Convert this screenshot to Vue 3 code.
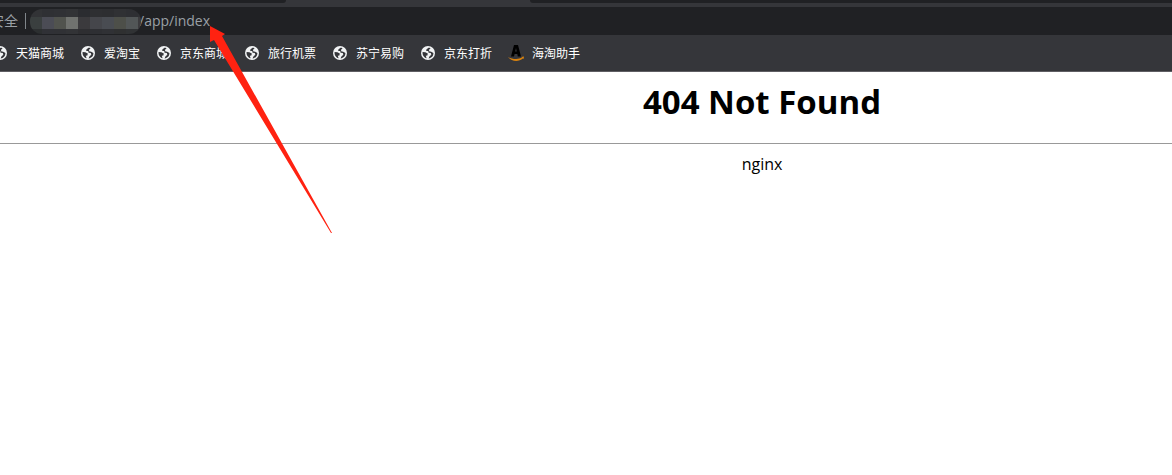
<script setup>
import { ref } from 'vue'

const url = ref('/app/index')

const bookmarks = [
    { title: '天猫商城', icon: 'globe' },
    { title: '爱淘宝', icon: 'globe' },
    { title: '京东商城', icon: 'globe' },
    { title: '旅行机票', icon: 'globe' },
    { title: '苏宁易购', icon: 'globe' },
    { title: '京东打折', icon: 'globe' },
    { title: '海淘助手', icon: 'amazon' },
]

// blurred host name, one colour per tile
const tiles = [
    '#323336', '#2f3034', '#303135', '#323336', '#2b2c30', '#2e2f32', '#2d2e31', '#303134', '#2e2f33', '#303135',
    '#3a3f3f', '#4b4c55', '#51534e', '#70726f', '#3b3a3d', '#45464b', '#494c52', '#4d4f49', '#525657', '#3c3b3e',
    '#2c2f30', '#303136', '#303135', '#323336', '#2e2e31', '#2e2f33', '#303135', '#2f3031', '#303234', '#2d2d31',
]
</script>

<template>
    <div class="browser">
        <div class="tabs">
            <div class="tab-left"></div>
            <div class="tab-active"></div>
            <div class="tab-right"></div>
        </div>
        <div class="address">
            <label class="secure" for="url"><span>安全</span></label>
            <span class="divider"></span>
            <div class="host">
                <i v-for="(color, i) in tiles" :key="i" :style="{ backgroundColor: color }"></i>
            </div>
            <input id="url" v-model="url" type="text" spellcheck="false">
        </div>
        <nav class="bookmarks">
            <a v-for="item in bookmarks" :key="item.title" href="#">
                <svg v-if="item.icon === 'globe'" viewBox="0 0 16 16">
                    <circle cx="8" cy="8" r="7" fill="#f1f3f4" />
                    <path d="M9 2.6 6.5 4.2 6.2 6 8.2 6.1 8.6 7.8 10.8 8.1 11.3 9.8 9.4 11.6 8.6 13.4C11.6 13.2 13.5 10.8 13.4 8L11.2 6.8 9.2 6.2 9 4.8 10.6 3.4Z" fill="#35363a" />
                    <path d="M2.6 7 5.4 7.2 7.8 8.6 7.4 10.4 5.8 10.8 6.6 13.2C4.1 12.6 2.2 10.2 2.6 7Z" fill="#35363a" />
                </svg>
                <svg v-else viewBox="0 0 16 16">
                    <path d="M3 11.6 6 0H10L13 11.6H9.8L9.3 9H6.6L6 11.6ZM7.1 6.6H8.8L8 3Z" fill="#000" fill-rule="evenodd" />
                    <path d="M0 12C4.8 14.6 10.6 14.6 14.2 12.6L13.1 12 16 11.6 15.6 14 14.9 13.4C10.8 17 4 16.8 0 12Z" fill="#d8820f" />
                </svg>
                <span>{{ item.title }}</span>
            </a>
        </nav>
        <main>
            <h1>404 Not Found</h1>
            <hr>
            <p>nginx</p>
        </main>
        <svg class="arrow" viewBox="0 0 124 210">
            <path d="M1 1 16 9 13 11 123 208 122 208 5 15 1 17Z" fill="#ff2211" />
        </svg>
    </div>
</template>

<style>
body {
    margin: 0;
    background: #fff;
}
</style>

<style scoped>
.browser {
    position: relative;
    min-height: 100vh;
    font-family: "Open Sans", "Noto Sans CJK SC", sans-serif;
}

.tabs {
    display: flex;
    height: 3px;
    background: #35363a;
    border-bottom: 4px solid #35363a;
}

.tab-left {
    width: 286px;
    background: #202124;
    border-bottom-right-radius: 3px;
}

.tab-active {
    width: 244px;
}

.tab-right {
    flex: 1;
    background: #202124;
    border-bottom-left-radius: 3px;
}

.address {
    display: flex;
    align-items: center;
    height: 28px;
    background: #202124;
    color: #9aa0a6;
    font-size: 14px;
}

/* only the end of the label shows, the rest runs off the left edge */
.secure {
    display: flex;
    justify-content: flex-end;
    width: 18px;
    white-space: nowrap;
    line-height: 20px;
}

.secure span {
    flex: none;
}

.divider {
    width: 1px;
    height: 16px;
    margin: 0 4px 0 7px;
    background: #80868b;
}

.host {
    z-index: 1;
    display: grid;
    grid-template-columns: repeat(9, 12px) 4px;
    grid-template-rows: 8px 12px 5px;
    width: 111px;
    overflow: hidden;
    border-radius: 12px;
}

#url {
    flex: 1;
    min-width: 0;
    margin-left: -2px;
    padding: 0;
    border: 0;
    outline: 0;
    background: transparent;
    color: #9aa0a6;
    font: inherit;
    line-height: 20px;
}

.bookmarks {
    display: flex;
    gap: 16px;
    align-items: center;
    height: 36px;
    margin-left: -8px;
    background: #35363a;
    border-bottom: 1px solid #5f5e63;
}

.bookmarks a {
    display: flex;
    flex: none;
    gap: 8px;
    align-items: center;
    color: #fff;
    font-size: 12px;
    line-height: 16px;
    text-decoration: none;
}

.bookmarks span {
    padding-top: 2px;
}

.bookmarks svg {
    width: 16px;
    height: 16px;
}

/* the page is scrolled under the left edge, its centre sits right of the window's */
main {
    padding-left: 352px;
    color: #000;
    text-align: center;
}

h1 {
    margin: 0;
    padding: 8px 0 20px;
    font-size: 33px;
    line-height: 43px;
}

hr {
    height: 1px;
    margin: 0 0 0 -352px;
    border: 0;
    background: #999;
}

p {
    margin: 0;
    padding: 8px 0;
    font-size: 16px;
    line-height: 24px;
}

.arrow {
    position: absolute;
    top: 25px;
    left: 209px;
    width: 124px;
    height: 210px;
    pointer-events: none;
}
</style>
